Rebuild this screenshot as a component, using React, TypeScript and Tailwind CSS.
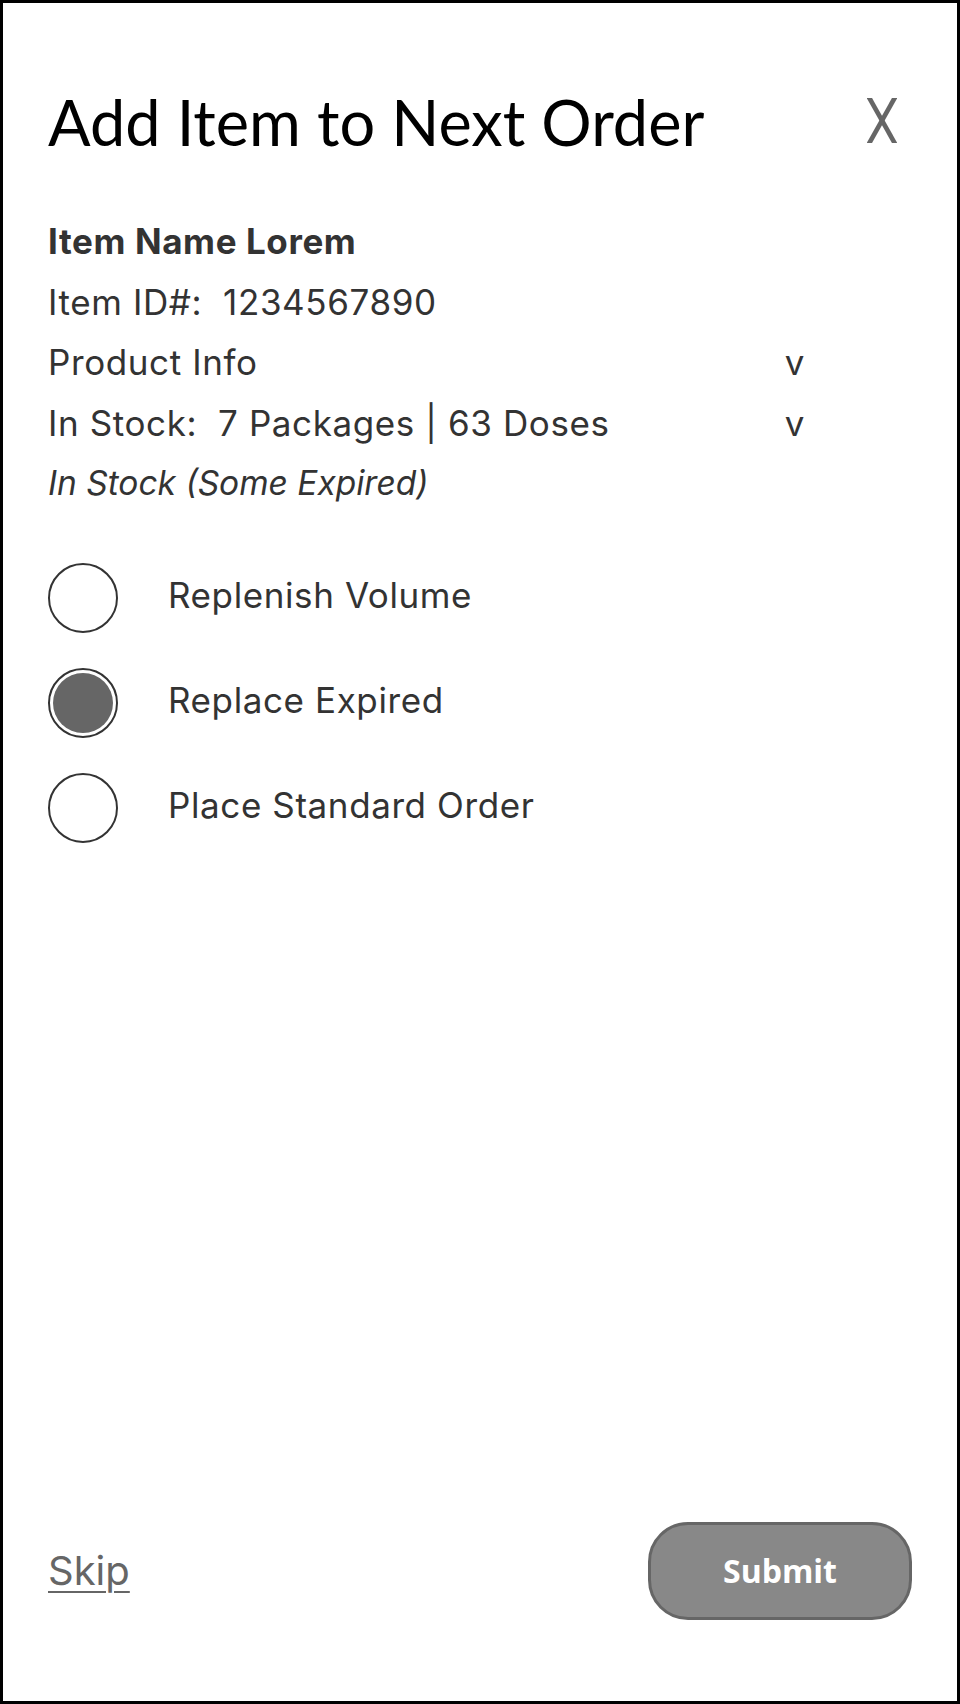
import React, { useState } from "react";

const options = ["Replenish Volume", "Replace Expired", "Place Standard Order"];

function Radio({ checked }: { checked: boolean }) {
    return (
        <span className="flex items-center justify-center w-[70px] h-[70px] rounded-full border-[2.75px] border-[#333333] shrink-0">
            {checked && <span className="block w-[60px] h-[60px] rounded-full bg-[#666666]" />}
        </span>
    );
}

export default function App() {
    const [choice, setChoice] = useState(1);

    return (
        <div className="w-[960px] h-[1704px] border-[3px] border-black bg-white flex flex-col px-[45px] pt-[79px] pb-[81px] font-['Inter',sans-serif] text-[#333333]">
            <div className="flex items-start justify-between">
                <h1 className="font-['Lato',sans-serif] text-[63px] leading-[80px] text-black">
                    Add Item to Next Order
                </h1>
                <button className="mt-[16px] mr-[15px]" aria-label="Close">
                    <svg width="30" height="45" viewBox="0 0 30 45">
                        <line x1="-0.4" y1="-5" x2="30.4" y2="50" stroke="#666666" strokeWidth="4.6" />
                        <line x1="30.4" y1="-5" x2="-0.4" y2="50" stroke="#666666" strokeWidth="4.6" />
                    </svg>
                </button>
            </div>

            <div className="mt-[49px] text-[35px] leading-[60.5px] tracking-[0.6px]">
                <div className="font-bold">Item Name Lorem</div>
                <div>Item ID#:&nbsp; 1234567890</div>
                <div className="flex justify-between w-[757px]">
                    <span>Product Info</span>
                    <span>v</span>
                </div>
                <div className="flex justify-between w-[757px]">
                    <span>In Stock:&nbsp; 7 Packages | 63 Doses</span>
                    <span>v</span>
                </div>
                <div className="italic text-[33.5px] tracking-normal">In Stock (Some Expired)</div>
            </div>

            <div className="mt-[49px] flex flex-col gap-[35px]">
                {options.map((label, i) => (
                    <label
                        key={label}
                        className="flex items-center gap-[50px] cursor-pointer"
                        onClick={() => setChoice(i)}
                    >
                        <Radio checked={choice === i} />
                        <span className="text-[35px] tracking-[0.6px] pb-[4px]">{label}</span>
                    </label>
                ))}
            </div>

            <div className="flex-1" />

            <div className="flex items-center justify-between">
                <a href="#" className="text-[40px] text-[#666666] underline decoration-2 underline-offset-[6px]">
                    Skip
                </a>
                <button className="w-[264px] h-[98px] rounded-[40px] bg-[#888888] border-[3px] border-[#666666] text-white font-bold text-[32px] font-['Open_Sans',sans-serif]">
                    Submit
                </button>
            </div>
        </div>
    );
}
